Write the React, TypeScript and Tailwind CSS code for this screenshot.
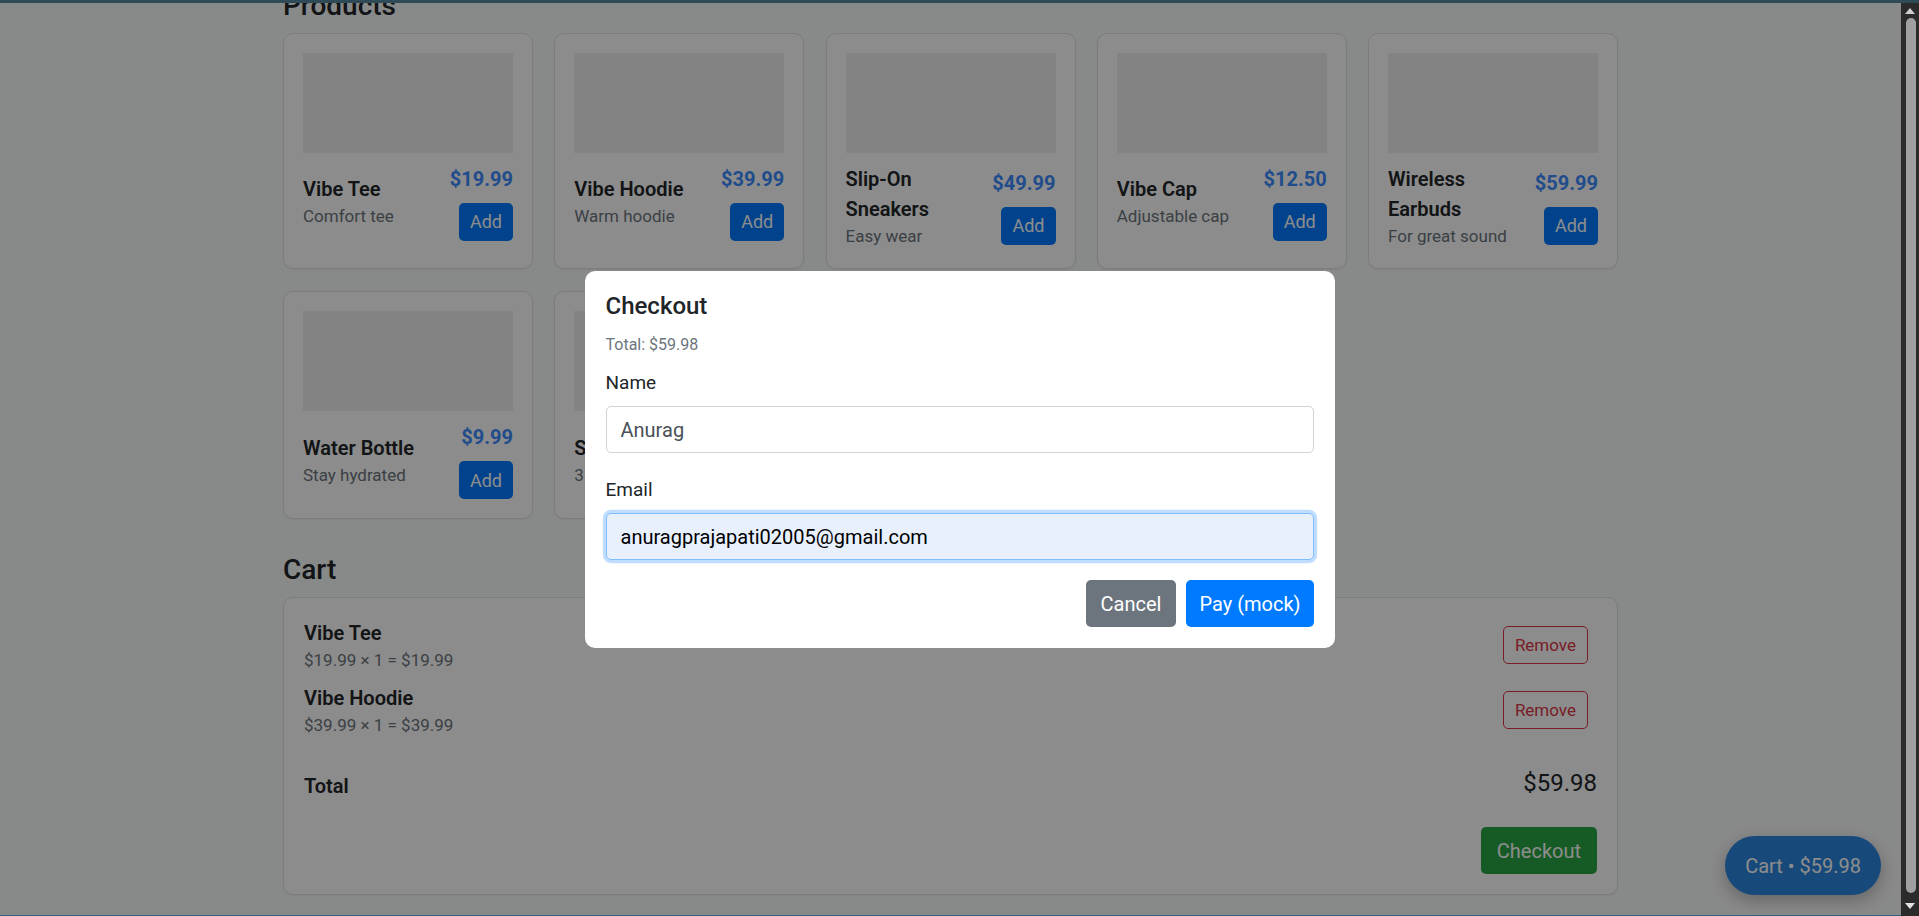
import { useCallback } from "react";

const PRODUCTS = [
  { name: "Vibe Tee", desc: "Comfort tee", price: "$19.99" },
  { name: "Vibe Hoodie", desc: "Warm hoodie", price: "$39.99" },
  { name: "Slip-On Sneakers", desc: "Easy wear", price: "$49.99" },
  { name: "Vibe Cap", desc: "Adjustable cap", price: "$12.50" },
  { name: "Wireless Earbuds", desc: "For great sound", price: "$59.99" },
  { name: "Water Bottle", desc: "Stay hydrated", price: "$9.99" },
  { name: "Sticker Pack", desc: "3 vinyl stickers", price: "$4.99" },
];

const CART = [
  { name: "Vibe Tee", line: "$19.99 × 1 = $19.99" },
  { name: "Vibe Hoodie", line: "$39.99 × 1 = $39.99" },
];

function ProductCard({ name, desc, price }: { name: string; desc: string; price: string }) {
  return (
    <div className="rounded-[10px] border border-[#dee2e6] bg-white p-[19px] shadow-[0_1px_2px_rgba(0,0,0,0.05)]">
      <div className="h-[100px] bg-[#eeeeee]" />
      <div className="mt-[11px] flex items-center justify-between gap-2">
        <div className="min-w-0 flex-1">
          <div className="text-[20px] font-semibold leading-[30px] text-[#212529]">{name}</div>
          <div className="text-[17px] leading-[25.5px] text-[#6c757d]">{desc}</div>
        </div>
        <div className="flex shrink-0 flex-col items-end">
          <div className="text-[20px] font-bold leading-[30px] text-[#3d8bfd]">{price}</div>
          <button type="button" className="mt-[9px] h-[38px] rounded-[5px] bg-[#007bff] px-[11px] text-[18px] text-white">
            Add
          </button>
        </div>
      </div>
    </div>
  );
}

function Scrollbar() {
  return (
    <div className="flex w-[18px] flex-col items-center bg-[#2b2b2b]">
      <svg width="10" height="6" viewBox="0 0 10 6" className="mt-[5px]">
        <polygon points="5,0 10,6 0,6" fill="#cfcfcf" />
      </svg>
      <div className="mt-[4px] ml-[2px] w-[10px] flex-1 rounded-full bg-[#9f9f9f]" />
      <svg width="10" height="6" viewBox="0 0 10 6" className="mt-[10px] mb-[7px]">
        <polygon points="0,0 10,0 5,6" fill="#e2e2e2" />
      </svg>
    </div>
  );
}

export default function App() {
  // page is shown scrolled down to the bottom
  const scrollRef = useCallback((el: HTMLDivElement | null) => {
    if (el) el.scrollTop = 38;
  }, []);

  return (
    <div className="relative flex h-[916px] w-full flex-col overflow-hidden bg-[#f8f9fa] text-[#212529] [font-family:Roboto,'Liberation_Sans',sans-serif]">
      <div className="h-[3px] shrink-0 bg-[#2f4b57]" />

      <div className="flex min-h-0 flex-1">
        <div className="flex min-w-0 flex-1 flex-col">
          <div className="relative min-h-0 flex-1">
            <div ref={scrollRef} className="h-full overflow-y-auto [scrollbar-width:none]">
              <main className="mx-auto w-[1335px] pt-[24px] pb-[21px]">
                <h2 className="mb-[10px] text-[28px] font-medium leading-[1.2]">Products</h2>
                <div className="grid grid-cols-[repeat(5,250px)] justify-between gap-y-[22px]">
                  {PRODUCTS.map((p) => (
                    <ProductCard key={p.name} {...p} />
                  ))}
                </div>

                <h2 className="mt-[34px] mb-[10px] text-[28px] font-medium leading-[1.2]">Cart</h2>
                <div className="rounded-[10px] border border-[#dee2e6] bg-white p-5 shadow-[0_1px_2px_rgba(0,0,0,0.05)]">
                  <div className="flex flex-col gap-[9.5px]">
                    {CART.map((c) => (
                      <div key={c.name} className="flex items-center justify-between pr-[9px]">
                        <div>
                          <div className="text-[20px] font-semibold leading-[30px]">{c.name}</div>
                          <div className="text-[17px] leading-[25.5px] text-[#6c757d]">{c.line}</div>
                        </div>
                        <button type="button" className="h-[38px] rounded-[5px] border border-[#dc3545] px-[11px] text-[17px] text-[#dc3545]">
                          Remove
                        </button>
                      </div>
                    ))}
                  </div>
                  <div className="mt-[27px] flex items-end justify-between">
                    <div className="text-[20px] font-semibold leading-[30px]">Total</div>
                    <div className="text-[24px] leading-[36px]">$59.98</div>
                  </div>
                  <div className="mt-[26px] flex justify-end">
                    <button type="button" className="h-[47px] rounded-[5px] bg-[#28a745] px-4 text-[20px] text-white">
                      Checkout
                    </button>
                  </div>
                </div>
              </main>
            </div>

            {/* floating cart button */}
            <button
              type="button"
              className="absolute right-5 bottom-5 h-[59px] rounded-full bg-[#2c86e0] px-5 text-[20px] text-white shadow-[0_6px_16px_rgba(0,0,0,0.25)]"
            >
              Cart • $59.98
            </button>

            {/* backdrop */}
            <div className="absolute inset-0 bg-black/45" />
          </div>
          <div className="h-px shrink-0 bg-[#3b5d80]" />
        </div>
        <Scrollbar />
      </div>

      {/* checkout modal */}
      <div className="absolute inset-x-0 top-[3px] bottom-0 flex items-center justify-center">
        <div className="w-[750px] rounded-[10px] bg-white p-[21px]">
          <h3 className="text-[24px] font-medium leading-[1.2]">Checkout</h3>
          <div className="mt-[13px] text-[16px] leading-[24px] text-[#6c757d]">Total: $59.98</div>

          <label className="mt-[11.5px] block text-[19px] leading-[28.5px]">Name</label>
          <input
            readOnly
            value="Anurag"
            className="mt-[9px] block h-[47px] w-full rounded-[5px] border border-[#ced4da] bg-white px-[14px] text-[20px] text-[#495057] outline-none"
          />

          <label className="mt-[22.5px] block text-[19px] leading-[28.5px]">Email</label>
          <input
            readOnly
            value="anuragprajapati02005@gmail.com"
            className="mt-[9px] block h-[47px] w-full rounded-[5px] border border-[#80bdff] bg-[#e8f0fe] px-[14px] text-[20px] text-black shadow-[0_0_0_3.2px_rgba(0,123,255,0.25)] outline-none"
          />

          <div className="mt-[20px] flex justify-end gap-[10px]">
            <button type="button" className="h-[47px] rounded-[5px] bg-[#6c757d] px-[15px] text-[20px] text-white">
              Cancel
            </button>
            <button type="button" className="h-[47px] rounded-[5px] bg-[#007bff] px-[13px] text-[20px] text-white">
              Pay (mock)
            </button>
          </div>
        </div>
      </div>
    </div>
  );
}
